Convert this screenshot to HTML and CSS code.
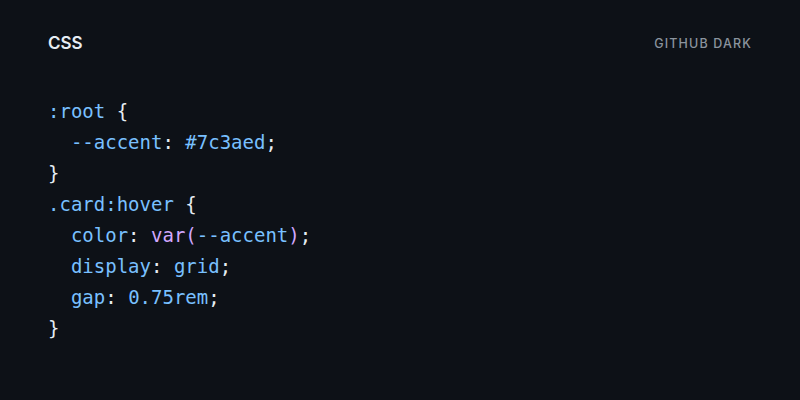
FILE: index.html
```html
<!DOCTYPE html>
<html>
<head>
<meta charset="utf-8">
<link rel="stylesheet" href="styles.css">
</head>
<body>
<main class="card">
  <header class="head">
    <span class="lang">CSS</span>
    <span class="theme">GITHUB DARK</span>
  </header>
  <pre class="code"><code><span class="b">:root</span> <span class="t">{</span>
  <span class="b">--accent</span><span class="t">:</span> <span class="b">#7c3aed</span><span class="t">;</span>
<span class="t">}</span>
<span class="b">.card:hover</span> <span class="t">{</span>
  <span class="b">color</span><span class="t">:</span> <span class="p">var(</span><span class="b">--accent</span><span class="p">)</span><span class="t">;</span>
  <span class="b">display</span><span class="t">:</span> <span class="b">grid</span><span class="t">;</span>
  <span class="b">gap</span><span class="t">:</span> <span class="b">0.75rem</span><span class="t">;</span>
<span class="t">}</span></code></pre>
</main>
</body>
</html>
```
FILE: styles.css
```css
html, body {
  margin: 0;
  padding: 0;
  background: #0d1117;
}
.card {
  width: 800px;
  height: 400px;
  box-sizing: border-box;
  padding: 32px 48px;
  display: flex;
  flex-direction: column;
}
.head {
  display: flex;
  justify-content: space-between;
  align-items: center;
  height: 22px;
}
.lang {
  font-family: Inter, "Noto Sans", sans-serif;
  font-weight: 600;
  font-size: 17px;
  color: #e6edf3;
}
.theme {
  font-family: Inter, "Noto Sans", sans-serif;
  font-weight: 500;
  font-size: 12.5px;
  letter-spacing: 1.15px;
  color: #8b949e;
}
.code {
  margin: 42px 0 0;
  font-family: "DejaVu Sans Mono", monospace;
  font-size: 19px;
  line-height: 31px;
  color: #e6edf3;
}
.b { color: #79c0ff; }
.t { color: #e6edf3; }
.p { color: #d2a8ff; }
```
